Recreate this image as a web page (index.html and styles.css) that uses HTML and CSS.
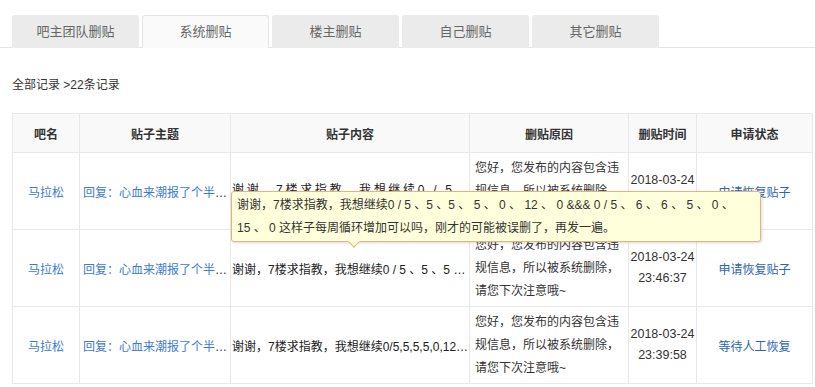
FILE: index.html
```html
<!DOCTYPE html>
<html lang="zh-CN">
  <head>
    <meta charset="UTF-8" />
    <meta name="viewport" content="width=device-width, initial-scale=1.0" />
    <title>删贴记录</title>
    <link rel="stylesheet" href="styles.css">
  </head>
  <body>
    <div id="wrap">
      <!-- 删贴类型 tab -->
      <ul class="tab-list">
        <li class="tab-item">吧主团队删贴</li>
        <li class="tab-item active">系统删贴</li>
        <li class="tab-item">楼主删贴</li>
        <li class="tab-item">自己删贴</li>
        <li class="tab-item">其它删贴</li>
      </ul>

      <p class="record-info">全部记录 &gt;22条记录</p>

      <div class="table-box">
        <table class="record-table">
          <colgroup>
            <col class="col-name" />
            <col class="col-title" />
            <col class="col-content" />
            <col class="col-reason" />
            <col class="col-time" />
            <col class="col-state" />
          </colgroup>
          <thead>
            <tr>
              <th>吧名</th>
              <th>贴子主题</th>
              <th>贴子内容</th>
              <th>删贴原因</th>
              <th>删贴时间</th>
              <th>申请状态</th>
            </tr>
          </thead>
          <tbody>
            <tr>
              <td class="t-name"><a href="#">马拉松</a></td>
              <td class="t-title"><a href="#">回复：心血来潮报了个半马，请大神指教</a></td>
              <td class="t-content spread">谢谢，7楼求指教，我想继续0 / 5 、5 、5 、 5 、 0 、 12 、 0</td>
              <td class="t-reason">您好，您发布的内容包含违规信息，所以被系统删除，请您下次注意哦~</td>
              <td class="t-time">2018-03-24<br />23:51:12</td>
              <td class="t-state"><a href="#">申请恢复贴子</a></td>
            </tr>
            <tr>
              <td class="t-name"><a href="#">马拉松</a></td>
              <td class="t-title"><a href="#">回复：心血来潮报了个半马，请大神指教</a></td>
              <td class="t-content">谢谢，7楼求指教，我想继续0 / 5 、5 、5 、 5 、 0 、 12 、 0</td>
              <td class="t-reason">您好，您发布的内容包含违规信息，所以被系统删除，请您下次注意哦~</td>
              <td class="t-time">2018-03-24<br />23:46:37</td>
              <td class="t-state"><a href="#">申请恢复贴子</a></td>
            </tr>
            <tr>
              <td class="t-name"><a href="#">马拉松</a></td>
              <td class="t-title"><a href="#">回复：心血来潮报了个半马，请大神指教</a></td>
              <td class="t-content">谢谢，7楼求指教，我想继续0/5,5,5,5,0,12,0&amp;&amp;&amp;0/5,6,6,5,0,15,0</td>
              <td class="t-reason">您好，您发布的内容包含违规信息，所以被系统删除，请您下次注意哦~</td>
              <td class="t-time">2018-03-24<br />23:39:58</td>
              <td class="t-state"><a href="#">等待人工恢复</a></td>
            </tr>
          </tbody>
        </table>

        <!-- 贴子内容 hover 시 전체 내용 -->
        <div class="content-tip">
          谢谢，7楼求指教，我想继续0 / 5 、5 、5 、 5 、 0 、 12 、 0 &amp;&amp;&amp; 0 / 5 、 6 、 6 、 5 、 0 、<br />
          15 、 0 这样子每周循环增加可以吗，刚才的可能被误删了，再发一遍。
        </div>
      </div>
    </div>
  </body>
</html>
```

FILE: styles.css
```css
* {
  margin: 0;
  padding: 0;
  list-style: none;
  box-sizing: border-box;
  text-decoration: none;
}
body {
  font-family: "Liberation Sans", Arial, "Noto Sans CJK SC", sans-serif;
  font-size: 12px;
  color: #333;
  background: #fff;
}
#wrap {
  padding-top: 15px;
}
.tab-list {
  display: flex;
  gap: 3px;
  padding-left: 12px;
  border-bottom: 1px solid #e5e5e5;
}
.tab-item {
  width: 127px;
  height: 33px;
  line-height: 33px;
  text-align: center;
  font-size: 13px;
  color: #666;
  background: #ebebeb;
  border-radius: 3px 3px 0 0;
  margin-bottom: -1px;
}
.tab-item.active {
  background: #fafafa;
  border: 1px solid #e5e5e5;
  border-bottom: 1px solid #fafafa;
  line-height: 31px;
}
.record-info {
  padding: 29px 0 0 12px;
  line-height: 17px;
}
.table-box {
  position: relative;
  margin: 19px 0 0 12px;
  width: 800px;
}
.record-table {
  width: 800px;
  table-layout: fixed;
  border-collapse: collapse;
}
.col-name { width: 67px; }
.col-title { width: 151px; }
.col-content { width: 239px; }
.col-reason { width: 159px; }
.col-time { width: 68px; }
.col-state { width: 116px; }
.record-table th,
.record-table td {
  border: 1px solid #e8e8e8;
  vertical-align: middle;
}
.record-table th {
  height: 39px;
  background: #f9f9f9;
  font-weight: bold;
  color: #333;
  text-align: center;
}
.record-table td {
  height: 77px;
}
.record-table a {
  color: #2d64b3;
}
.t-name {
  text-align: center;
}
.t-name a {
  color: #3d7bd1;
}
.t-title {
  padding-left: 3px;
  white-space: nowrap;
  overflow: hidden;
  text-overflow: ellipsis;
}
.t-title a {
  color: #3d7bd1;
}
.t-content {
  padding-left: 1px;
  white-space: nowrap;
  overflow: hidden;
  text-overflow: ellipsis;
  color: #222;
}
.t-content.spread {
  letter-spacing: 2.7px;
  text-overflow: clip;
  padding-bottom: 6px;
}
.t-reason {
  padding: 0 6px 0 5px;
  line-height: 23px;
}
.t-time {
  text-align: center;
  line-height: 21px;
  font-size: 12.5px;
}
.t-state {
  text-align: center;
}
.content-tip {
  position: absolute;
  left: 219px;
  top: 78px;
  width: 530px;
  height: 51px;
  padding: 2px 0 0 5px;
  line-height: 23px;
  color: #333;
  background: #ffffdb;
  border: 1px solid #d9ba7c;
  border-radius: 3px;
  box-shadow: 1px 1px 3px rgba(0, 0, 0, 0.15);
  white-space: nowrap;
}
.content-tip::after {
  content: "";
  position: absolute;
  left: 118px;
  bottom: -5px;
  width: 7px;
  height: 7px;
  background: #ffffdb;
  border-right: 1px solid #d9ba7c;
  border-bottom: 1px solid #d9ba7c;
  transform: rotate(45deg);
}
```
